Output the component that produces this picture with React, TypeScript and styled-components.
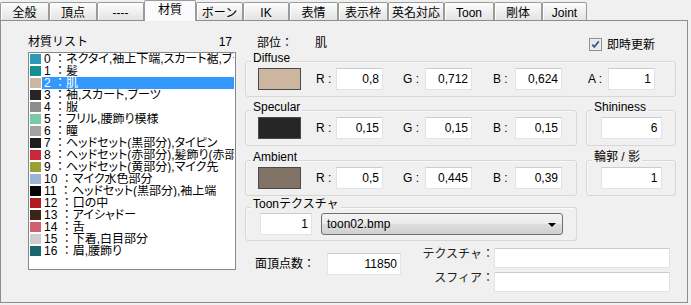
import React from "react";
import styled, { createGlobalStyle } from "styled-components";

const GlobalStyle = createGlobalStyle`
  html, body {
    margin: 0;
    padding: 0;
    background: #f0f0f0;
  }
  body {
    font-family: "Liberation Sans", "Noto Sans CJK JP", sans-serif;
    font-size: 12px;
    color: #000;
  }
`;

const Window = styled.div`
  width: 691px;
  height: 305px;
  background: #f0f0f0;
  overflow: hidden;
`;

const TabBar = styled.div`
  display: flex;
  align-items: flex-end;
  height: 20px;
`;

const Tab = styled.div<{ $w: number; $active?: boolean }>`
  box-sizing: border-box;
  position: relative;
  z-index: ${(p) => (p.$active ? 2 : 1)};
  width: ${(p) => p.$w}px;
  height: ${(p) => (p.$active ? 21 : 18)}px;
  margin-bottom: ${(p) => (p.$active ? -1 : 0)}px;
  padding: ${(p) => (p.$active ? "0 0 3px" : "2px 0 0")};
  border: 1px solid #9a9a9a;
  border-bottom: none;
  border-radius: 2px 2px 0 0;
  background: ${(p) =>
    p.$active ? "#fbfbfb" : "linear-gradient(#fdfdfd, #f1f1f1 45%, #e3e3e3)"};
  box-shadow: ${(p) => (p.$active ? "none" : "inset 1px 0 #ffffff")};
  display: flex;
  align-items: center;
  justify-content: center;
  line-height: 14px;
  white-space: nowrap;
`;

const Panel = styled.div`
  box-sizing: border-box;
  width: 688px;
  height: 283px;
  border: 1px solid #8e8e8e;
  background: #f0f0f0;
  display: flex;
`;

/* ---- material list ---- */

const ListColumn = styled.div`
  width: 208px;
  margin-left: 27px;
  padding-top: 14px;
  display: flex;
  flex-direction: column;
`;

const ListHeader = styled.div`
  display: flex;
  justify-content: space-between;
  height: 17px;
  line-height: 14px;
  padding-right: 4px;
`;

const ListBox = styled.div`
  box-sizing: border-box;
  height: 218px;
  border: 1px solid #828790;
  background: #fff;
  overflow: hidden;
`;

const ListRow = styled.div`
  display: flex;
  align-items: center;
  height: 12px;
`;

const ColorChip = styled.span<{ $c: string }>`
  flex: none;
  width: 11px;
  height: 10px;
  margin-left: 1px;
  background: ${(p) => p.$c};
`;

const RowText = styled.span<{ $selected?: boolean }>`
  flex: 1;
  min-width: 0;
  height: 12px;
  margin: 0 1px;
  padding-left: 2px;
  line-height: 12px;
  white-space: pre;
  overflow: hidden;
  background: ${(p) => (p.$selected ? "#3399ff" : "transparent")};
  color: ${(p) => (p.$selected ? "#fff" : "#000")};
`;

const RowName = styled.span`
  font-feature-settings: "palt";
`;

/* ---- detail side ---- */

const DetailColumn = styled.div`
  width: 431px;
  margin-left: 9px;
  padding-top: 15px;
  display: flex;
  flex-direction: column;
`;

const HeaderRow = styled.div`
  display: flex;
  align-items: center;
  justify-content: space-between;
  height: 14px;
  line-height: 14px;
  padding: 0 21px 0 12px;
`;

const PartLabel = styled.span`
  display: inline-block;
  width: 58px;
`;

const CheckRow = styled.label`
  display: flex;
  align-items: center;
  gap: 5px;
  margin-top: 3px;
`;

const GroupRow = styled.div<{ $mt: number }>`
  display: flex;
  gap: 9px;
  margin-top: ${(p) => p.$mt}px;
`;

const Group = styled.div<{ $w?: number; $h?: number; $pl?: number; $center?: boolean }>`
  position: relative;
  box-sizing: border-box;
  flex: ${(p) => (p.$w ? "none" : "1")};
  width: ${(p) => (p.$w ? `${p.$w}px` : "auto")};
  height: ${(p) => p.$h ?? 36}px;
  border: 1px solid #d7d7d7;
  border-radius: 3px;
  box-shadow: inset 1px 1px #fafafa;
  display: flex;
  align-items: center;
  justify-content: ${(p) => (p.$center ? "center" : "flex-start")};
  padding-left: ${(p) => p.$pl ?? 12}px;
`;

const Legend = styled.span`
  position: absolute;
  top: -11px;
  left: 5px;
  padding: 0 2px;
  background: #f0f0f0;
  line-height: 14px;
  white-space: nowrap;
`;

const ColorBox = styled.span<{ $c: string }>`
  box-sizing: border-box;
  width: 43px;
  height: 22px;
  border: 1px solid #4a4a4a;
  background: ${(p) => p.$c};
`;

const ChannelLabel = styled.span<{ $ml: number; $w: number }>`
  width: ${(p) => p.$w}px;
  margin-left: ${(p) => p.$ml}px;
  line-height: 14px;
`;

const Field = styled.input<{ $w: number; $h?: number }>`
  box-sizing: border-box;
  width: ${(p) => p.$w}px;
  height: ${(p) => p.$h ?? 22}px;
  margin: 0;
  padding: 0 3px 0 2px;
  border: 1px solid #e2e3ea;
  border-top-color: #c9ccd2;
  background: #fff;
  font: inherit;
  font-size: 12px;
  text-align: right;
  color: #000;
  outline: none;
`;

const Combo = styled.div`
  box-sizing: border-box;
  display: flex;
  align-items: center;
  justify-content: space-between;
  width: 242px;
  height: 22px;
  margin-left: 9px;
  padding: 0 6px 0 5px;
  border: 1px solid #707070;
  border-radius: 3px;
  background: linear-gradient(#f3f3f3, #ebebeb 50%, #dddddd 51%, #d0d0d0);
  line-height: 14px;
`;

const DropArrow = styled.span`
  width: 0;
  height: 0;
  border-left: 4px solid transparent;
  border-right: 4px solid transparent;
  border-top: 4px solid #000;
  margin-top: 1px;
`;

const BottomRow = styled.div`
  display: flex;
  margin-top: 7px;
  padding: 0 6px 0 10px;
`;

const VertexBlock = styled.div`
  display: flex;
  align-items: center;
  margin-top: 5px;
  align-self: flex-start;
`;

const VertexLabel = styled.span`
  width: 72px;
  line-height: 14px;
`;

const TexGrid = styled.div`
  margin-left: auto;
  display: grid;
  grid-template-columns: auto 176px;
  grid-auto-rows: 20px;
  row-gap: 4px;
`;

const TexLabel = styled.span`
  text-align: right;
  line-height: 12px;
  margin-top: 0px;
  color: #222;
`;

const Check = () => (
  <svg width="13" height="13" viewBox="0 0 13 13">
    <rect x="0.5" y="0.5" width="12" height="12" fill="#f4f4f4" stroke="#8f8f8f" />
    <rect x="1.5" y="1.5" width="10" height="10" fill="#e6e9ee" />
    <path d="M3.2 6.6 L5.3 8.9 L9.8 3.4" fill="none" stroke="#3a5a8c" strokeWidth="1.7" />
  </svg>
);

const tabs: [string, number][] = [
  ["全般", 49],
  ["頂点", 48],
  ["----", 47],
  ["材質", 52],
  ["ボーン", 47],
  ["IK", 46],
  ["表情", 49],
  ["表示枠", 50],
  ["英名対応", 56],
  ["Toon", 50],
  ["剛体", 48],
  ["Joint", 45],
];

const materials: [string, string][] = [
  ["ネクタイ,袖上下端,スカート裾,ブーツ", "#2a9ab6"],
  ["髪", "#13908f"],
  ["肌", "#ccb69f"],
  ["袖,スカート,ブーツ", "#262626"],
  ["服", "#8e8e8e"],
  ["フリル,腰飾り模様", "#7bcaa6"],
  ["瞳", "#a3a3a3"],
  ["ヘッドセット(黒部分),タイピン", "#1d1d1d"],
  ["ヘッドセット(赤部分),髪飾り(赤部分)", "#c8283a"],
  ["ヘッドセット(黄部分),マイク先", "#9a9f33"],
  ["マイク水色部分", "#9bb4d4"],
  ["ヘッドセット(黒部分),袖上端", "#050505"],
  ["口の中", "#b01b1f"],
  ["アイシャドー", "#3b2519"],
  ["舌", "#d0606b"],
  ["下着,白目部分", "#cdcdcd"],
  ["眉,腰飾り", "#19666f"],
];

const channels = [
  { k: "R", ml: 15, w: 20 },
  { k: "G", ml: 20, w: 22 },
  { k: "B", ml: 21, w: 22 },
  { k: "A", ml: 26, w: 20 },
];

const ColorRow = ({ color, values }: { color: string; values: string[] }) => (
  <>
    <ColorBox $c={color} />
    {values.map((v, i) => (
      <React.Fragment key={channels[i].k}>
        <ChannelLabel $ml={channels[i].ml} $w={channels[i].w}>
          {channels[i].k} :
        </ChannelLabel>
        <Field $w={47} readOnly value={v} />
      </React.Fragment>
    ))}
  </>
);

export default function App() {
  return (
    <Window>
      <GlobalStyle />
      <TabBar>
        {tabs.map(([t, w]) => (
          <Tab key={t} $w={w} $active={t === "材質"}>
            {t}
          </Tab>
        ))}
      </TabBar>
      <Panel>
        <ListColumn>
          <ListHeader>
            <span>材質リスト</span>
            <span>17</span>
          </ListHeader>
          <ListBox>
            {materials.map(([name, c], i) => (
              <ListRow key={i}>
                <ColorChip $c={c} />
                <RowText $selected={i === 2}>
                  {`${i} ：`}
                  <RowName>{name}</RowName>
                </RowText>
              </ListRow>
            ))}
          </ListBox>
        </ListColumn>

        <DetailColumn>
          <HeaderRow>
            <span>
              <PartLabel>部位：</PartLabel>肌
            </span>
            <CheckRow>
              <Check />
              即時更新
            </CheckRow>
          </HeaderRow>

          <GroupRow $mt={11}>
            <Group>
              <Legend>Diffuse</Legend>
              <ColorRow color="#ccb69f" values={["0,8", "0,712", "0,624", "1"]} />
            </Group>
          </GroupRow>

          <GroupRow $mt={13}>
            <Group>
              <Legend>Specular</Legend>
              <ColorRow color="#262626" values={["0,15", "0,15", "0,15"]} />
            </Group>
            <Group $w={90} $pl={0} $center>
              <Legend>Shininess</Legend>
              <Field $w={61} readOnly value="6" />
            </Group>
          </GroupRow>

          <GroupRow $mt={14}>
            <Group>
              <Legend>Ambient</Legend>
              <ColorRow color="#807264" values={["0,5", "0,445", "0,39"]} />
            </Group>
            <Group $w={90} $pl={0} $center>
              <Legend>輪郭 / 影</Legend>
              <Field $w={61} readOnly value="1" />
            </Group>
          </GroupRow>

          <GroupRow $mt={11}>
            <Group $h={34} $pl={14}>
              <Legend>Toonテクスチャ</Legend>
              <Field $w={52} readOnly value="1" />
              <Combo>
                <span>toon02.bmp</span>
                <DropArrow />
              </Combo>
            </Group>
            <div style={{ width: 90 }} />
          </GroupRow>

          <BottomRow>
            <VertexBlock>
              <VertexLabel>面頂点数：</VertexLabel>
              <Field $w={74} readOnly value="11850" />
            </VertexBlock>
            <TexGrid>
              <TexLabel>テクスチャ：</TexLabel>
              <Field $w={176} $h={20} readOnly value="" />
              <TexLabel>スフィア：</TexLabel>
              <Field $w={176} $h={20} readOnly value="" />
            </TexGrid>
          </BottomRow>
        </DetailColumn>
      </Panel>
    </Window>
  );
}
